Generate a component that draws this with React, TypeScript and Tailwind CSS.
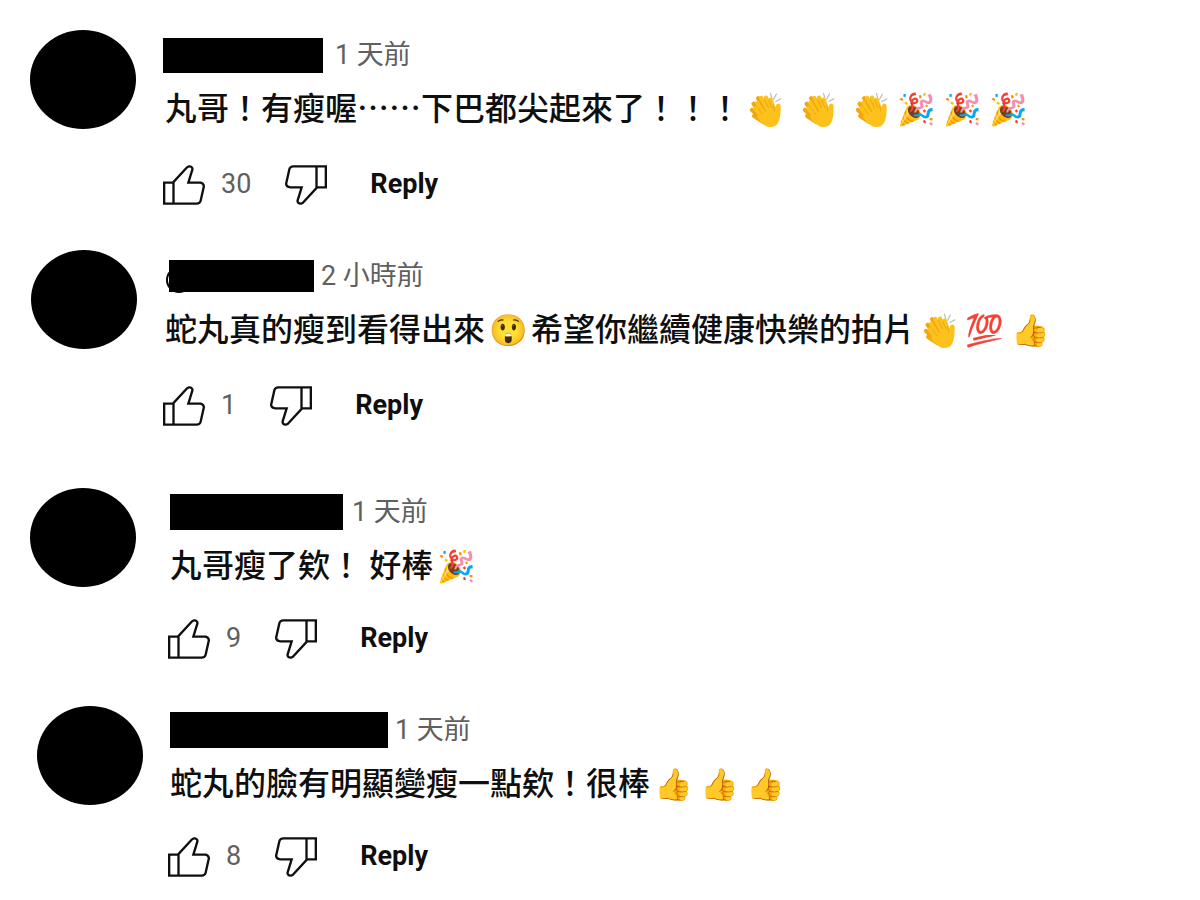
import clsx from "clsx";

type Comment = {
  id: number;
  article: string;
  content: string;
  name: string;
  peek?: string;
  time: string;
  text: string;
  likes: number;
  actions: string;
};

const comments: Comment[] = [
  {
    id: 1,
    article: "gap-[27px] pl-[30px]",
    content: "pt-[7px]",
    name: "mr-3 h-[35px] w-40",
    time: "1 天前",
    text: "丸哥！有瘦喔……下巴都尖起來了！！！👏 👏 👏🎉🎉🎉",
    likes: 30,
    actions: "mt-[35px]",
  },
  {
    id: 2,
    article: "mt-[45px] gap-[26px] pl-[31px]",
    content: "pt-2",
    name: "ml-[6px] mr-[7px] h-8 w-[145px]",
    peek: "left-[3px] top-[9px]",
    time: "2 小時前",
    text: "蛇丸真的瘦到看得出來😲希望你繼續健康快樂的拍片👏💯👍",
    likes: 1,
    actions: "mt-[35px]",
  },
  {
    id: 3,
    article: "mt-[62px] gap-8 pl-[30px]",
    content: "pt-[6px]",
    name: "ml-[2px] mr-[9px] h-9 w-[173px]",
    time: "1 天前",
    text: "丸哥瘦了欸！ 好棒🎉",
    likes: 9,
    actions: "mt-8",
  },
  {
    id: 4,
    article: "mt-[47px] gap-[25px] pl-[37px]",
    content: "pt-[6px]",
    name: "ml-[2px] mr-[7px] h-9 w-[218px]",
    time: "1 天前",
    text: "蛇丸的臉有明顯變瘦一點欸！很棒👍👍👍",
    likes: 8,
    actions: "mt-8",
  },
];

function ThumbIcon({ down }: { down?: boolean }) {
  return (
    <svg viewBox="3 4 18 17" className={clsx("h-10 w-[42px]", down && "rotate-180")} fill="currentColor" aria-hidden>
      <path d="M18.77,11h-4.23l1.52-4.94C16.38,5.03,15.54,4,14.38,4c-0.58,0-1.14,0.24-1.52,0.65L7,11H3v10h4h1h9.43c1.06,0,1.98-0.67,2.19-1.61l1.34-6C21.23,12.15,20.18,11,18.77,11z M7,20H4v-8h3V20z M19.98,13.17l-1.34,6C18.54,19.65,18.03,20,17.43,20H8v-8.61l5.6-6.06C13.79,5.12,14.08,5,14.38,5c0.26,0,0.5,0.11,0.63,0.3c0.07,0.1,0.15,0.26,0.09,0.47l-1.52,4.94L13.18,12h1.35h4.23c0.41,0,0.8,0.17,1.03,0.46C19.92,12.61,20.05,12.86,19.98,13.17z" />
    </svg>
  );
}

function ClapIcon() {
  return (
    <svg viewBox="0 0 128 128" className="ml-1 inline-block size-9 align-[-8px]" role="img" aria-label="👏">
      <g fill="none" stroke="#b4b8bc" strokeWidth="4" strokeLinecap="round">
        <path d="M80 5l4 14M101 7L91 26M117 24L99 34" />
      </g>
      {/* back hand */}
      <g fill="none" stroke="#f2a60f" strokeWidth="15" strokeLinecap="round">
        <path d="M36 22L70 70M20 42L60 88M14 64L52 98M22 85L56 108" />
      </g>
      {/* front hand */}
      <path
        d="M48 68L92 64C98 54 100 41 108 41C117 41 117 52 116 66C115 88 112 103 105 113C96 126 74 128 61 119C49 110 40 102 32 88Z"
        fill="#fcc21b"
      />
      <g fill="none" stroke="#fcc21b" strokeWidth="15" strokeLinecap="round">
        <path d="M47 21L76 76M64 20L87 74M81 27L94 70M33 38L66 90M26 58L58 98" />
      </g>
      <g fill="none" stroke="#e8a010" strokeWidth="3" strokeLinecap="round">
        <path d="M58 26L73 56M74 30L85 56M43 39L62 69M37 60L52 80M94 68C95 62 93 54 90 46" />
      </g>
    </svg>
  );
}

function CommentText({ text }: { text: string }) {
  return text.split(/(\p{Extended_Pictographic})/u).map((part, i) => {
    if (!/\p{Extended_Pictographic}/u.test(part)) return part;
    return (
      <span key={i} className="inline-block w-[46px] text-center text-[31px] leading-9">
        {part === "👏" ? <ClapIcon /> : part}
      </span>
    );
  });
}

export default function App() {
  return (
    <main lang="zh-Hant" className="min-h-screen bg-white pt-[30px] font-['Roboto','Noto_Sans_CJK_TC',sans-serif] text-[#0f0f0f]">
      {comments.map((c) => (
        <article key={c.id} className={clsx("flex items-start", c.article)}>
          <div className="h-[99px] w-[106px] shrink-0 rounded-[50%] bg-black" />
          <div className={clsx("min-w-0 flex-1", c.content)}>
            <header className="relative flex h-9 items-center text-[27px] leading-9 text-[#606060]">
              {c.peek ? <span className={clsx("absolute h-[26px] w-[26px] rounded-full border-2 border-black", c.peek)} /> : null}
              <span className={clsx("relative bg-black", c.name)} />
              <time>{c.time}</time>
            </header>
            <p className="mt-[9px] pl-[2px] font-['Noto_Sans_CJK_TC',sans-serif] text-[32px] leading-[48px] font-medium">
              <CommentText text={c.text} />
            </p>
            <div className={clsx("flex h-10 items-start text-[27px] leading-[38px]", c.actions)}>
              <button type="button" aria-label="Like">
                <ThumbIcon />
              </button>
              <span className="ml-4 text-[#606060]">{c.likes}</span>
              <button type="button" aria-label="Dislike" className="ml-[34px]">
                <ThumbIcon down />
              </button>
              <button type="button" className="ml-[43px] font-bold">
                Reply
              </button>
            </div>
          </div>
        </article>
      ))}
    </main>
  );
}
